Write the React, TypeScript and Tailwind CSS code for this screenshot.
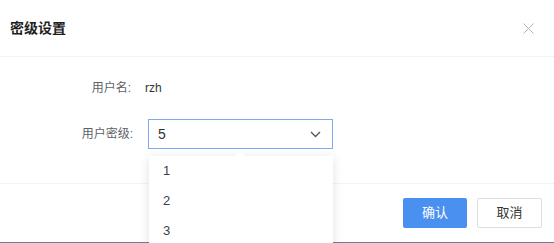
import { useState } from 'react'

const font = { fontFamily: '"Liberation Sans", "Noto Sans CJK SC", sans-serif' }

export default function App() {
    const [level] = useState('5')
    const options = ['1', '2', '3']

    return (
        <div style={font} className="relative w-[554px] h-[243px] bg-white overflow-hidden flex flex-col">
            {/* Header */}
            <div className="h-[57px] shrink-0 flex items-center justify-between pl-[10px] pr-[20px] border-b border-[#f3f3f5]">
                <h3 className="text-[14px] font-bold text-[#1f1f1f] tracking-[0px]">密级设置</h3>
                <svg width="11" height="11" viewBox="0 0 11 11" className="text-[#b4b4b4]">
                    <path d="M0.5 0.5L10.5 10.5M10.5 0.5L0.5 10.5" stroke="currentColor" strokeWidth="1" />
                </svg>
            </div>

            {/* Body */}
            <div className="h-[126px] shrink-0 pt-[16px] flex flex-col gap-[16px]">
                <div className="h-[30px] flex items-center">
                    <span className="w-[148px] pr-[17px] text-right text-[12px] text-[#606266]">用户名:</span>
                    <span className="text-[12px] text-[#333] -ml-[3px]">rzh</span>
                </div>
                <div className="h-[30px] flex items-center">
                    <span className="w-[148px] pr-[15px] text-right text-[12px] text-[#606266]">用户密级:</span>
                    <div className="w-[185px] h-[30px] border border-[#7eaaf5] flex items-center justify-between pl-[9px] pr-[11px]">
                        <span className="text-[14px] text-[#333]">{level}</span>
                        <svg width="11" height="7" viewBox="0 0 11 7" className="text-[#555]">
                            <path d="M1 1L5.5 5.5L10 1" fill="none" stroke="currentColor" strokeWidth="1.3" />
                        </svg>
                    </div>
                </div>
            </div>

            {/* Footer */}
            <div className="flex-1 border-t border-[#f3f3f5] flex justify-end items-start gap-[10px] pt-[14px] pr-[12px]">
                <button className="w-[64px] h-[30px] rounded-[2px] bg-[#4a90f0] text-white text-[13px]">确认</button>
                <button className="w-[65px] h-[30px] rounded-[2px] border border-[#dcdfe6] bg-white text-[#333] text-[13px]">取消</button>
            </div>
            <div className="h-[1px] shrink-0 bg-[#7a788c]" />

            {/* Dropdown */}
            <div className="absolute left-[149px] top-[156px] w-[184px] h-[100px] bg-white shadow-[0_2px_10px_rgba(0,0,0,0.12)]">
                <div className="absolute -top-[5px] left-[85px] w-0 h-0 border-l-[6px] border-r-[6px] border-b-[6px] border-l-transparent border-r-transparent border-b-white" />
                {options.map(o => (
                    <div key={o} className="h-[30px] flex items-center pl-[14px] text-[13px] text-[#3c3c4a]">
                        {o}
                    </div>
                ))}
            </div>
        </div>
    )
}
